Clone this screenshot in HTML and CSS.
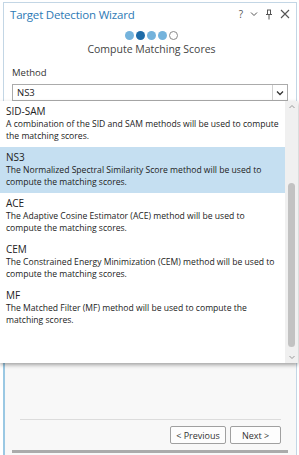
FILE: index.html
```html
<!DOCTYPE html>
<html lang="en">
<head>
  <meta charset="UTF-8">
  <title>Target Detection Wizard</title>
  <link rel="stylesheet" href="styles.css">
</head>
<body>

  <div class="wizard">
    <!-- title bar -->
    <div class="title-bar">
      <span class="title">Target Detection Wizard</span>
      <div class="win-icons">
        <span class="help">?</span>
        <svg width="8" height="6" viewBox="0 0 8 6"><path d="M1 1.5l3 3 3-3" fill="none" stroke="#555" stroke-width="1"/></svg>
        <svg width="8" height="11" viewBox="0 0 8 11"><path d="M2 1h4M2.5 1v4.5M5.5 1v4.5M1 5.5h6M4 5.5v5" fill="none" stroke="#555" stroke-width="1"/></svg>
        <svg width="10" height="10" viewBox="0 0 10 10"><path d="M1 1l8 8M9 1l-8 8" fill="none" stroke="#555" stroke-width="1.1"/></svg>
      </div>
    </div>

    <div class="steps">
      <span class="dot done"></span>
      <span class="dot current"></span>
      <span class="dot done"></span>
      <span class="dot done"></span>
      <span class="dot todo"></span>
    </div>
    <div class="step-name">Compute Matching Scores</div>

    <div class="field">
      <div class="field-label">Method</div>
      <div class="select">
        <span class="select-value">NS3</span>
        <span class="select-btn">
          <svg width="8" height="6" viewBox="0 0 8 6"><path d="M1 1.5l3 3 3-3" fill="none" stroke="#333" stroke-width="1.3"/></svg>
        </span>
      </div>
    </div>

    <div class="lower">
      <div class="footer">
        <div class="footer-line"></div>
        <div class="buttons">
          <button class="btn btn-prev">&lt; Previous</button>
          <button class="btn btn-next">Next &gt;</button>
        </div>
      </div>
      <div class="hscroll"></div>
    </div>
  </div>

  <!-- open dropdown list -->
  <div class="dropdown">
    <ul class="options">
      <li class="option">
        <div class="opt-name">SID-SAM</div>
        <div class="opt-desc">A combination of the SID and SAM methods will be used to compute the matching scores.</div>
      </li>
      <li class="option selected">
        <div class="opt-name">NS3</div>
        <div class="opt-desc">The Normalized Spectral Similarity Score method will be used to compute the matching scores.</div>
      </li>
      <li class="option">
        <div class="opt-name">ACE</div>
        <div class="opt-desc">The Adaptive Cosine Estimator (ACE) method will be used to compute the matching scores.</div>
      </li>
      <li class="option">
        <div class="opt-name">CEM</div>
        <div class="opt-desc">The Constrained Energy Minimization (CEM) method will be used to compute the matching scores.</div>
      </li>
      <li class="option">
        <div class="opt-name">MF</div>
        <div class="opt-desc">The Matched Filter (MF) method will be used to compute the matching scores.</div>
      </li>
    </ul>
    <div class="vscroll">
      <svg class="arrow" width="12" height="12" viewBox="0 0 12 12"><path d="M3.5 7l2.5-2.5 2.5 2.5" fill="none" stroke="#999" stroke-width="1"/></svg>
      <div class="track"><div class="thumb"></div></div>
      <svg class="arrow" width="12" height="12" viewBox="0 0 12 12"><path d="M3.5 5l2.5 2.5 2.5-2.5" fill="none" stroke="#999" stroke-width="1"/></svg>
    </div>
  </div>

</body>
</html>
```

FILE: styles.css
```css
body {
  margin: 0;
  font-family: 'Open Sans', 'Noto Sans', sans-serif;
  background: #fff;
  color: #222;
}

.wizard {
  margin: 2px 2px 0 3px;
  height: 453px;
  border: 1px solid #c3d6e5;
  border-bottom: none;
  background: #fff;
  display: flex;
  flex-direction: column;
  box-sizing: border-box;
}

.title-bar {
  height: 22px;
  padding: 0 6px;
  display: flex;
  justify-content: space-between;
  align-items: center;
}

.title {
  font-size: 11.5px;
  letter-spacing: -0.2px;
  color: #2d7ab5;
}

.win-icons {
  display: flex;
  align-items: center;
  gap: 7px;
  color: #555;
}

.help {
  font-size: 10px;
}

.steps {
  margin-top: 5px;
  height: 10px;
  display: flex;
  justify-content: center;
  align-items: center;
  gap: 2px;
  padding-left: 3px;
}

.dot {
  width: 9px;
  height: 9px;
  border-radius: 50%;
  box-sizing: border-box;
}

.dot.done {
  background: #74b3dc;
}

.dot.current {
  background: #1f6ca8;
}

.dot.todo {
  border: 1px solid #8a8a8a;
  background: #fff;
}

.step-name {
  margin-top: 1px;
  line-height: 16px;
  font-size: 10.5px;
  color: #444;
  text-align: center;
  padding-left: 3px;
}

.field {
  padding: 0 8px;
}

.field-label {
  margin-top: 9px;
  line-height: 14px;
  font-size: 9.5px;
  color: #333;
}

.select {
  margin-top: 4px;
  height: 17px;
  border: 1px solid #ababab;
  display: flex;
  align-items: center;
  justify-content: space-between;
  box-sizing: border-box;
}

.select-value {
  padding-left: 4px;
  font-size: 9.5px;
}

.select-btn {
  width: 14px;
  height: 15px;
  border-left: 1px solid #d0d0d0;
  display: flex;
  align-items: center;
  justify-content: center;
}

.lower {
  flex: 1;
  margin-top: 10px;
  margin-left: -1px;
  background: #f8f8f8;
  border-left: 2px solid #9ac8e3;
  display: flex;
  flex-direction: column;
  justify-content: flex-end;
}

.footer {
  padding: 0 15px 0 15px;
}

.footer-line {
  height: 1px;
  background: #dcdcdc;
}

.buttons {
  margin-top: 6px;
  display: flex;
  justify-content: flex-end;
  gap: 4px;
}

.btn {
  height: 18px;
  padding: 0;
  font-family: 'Open Sans', sans-serif;
  font-size: 9px;
  white-space: nowrap;
  color: #333;
  background: #fdfdfd;
  border: 1px solid #a0a0a0;
  border-radius: 2px;
}

.btn-prev {
  width: 56px;
}

.btn-next {
  width: 51px;
}

.hscroll {
  margin: 6px 8px 2px 7px;
  height: 3px;
  background: #ababab;
}

.dropdown {
  position: absolute;
  top: 101px;
  left: 0;
  width: 298px;
  height: 262px;
  background: #fff;
  display: flex;
  box-shadow: 0 2px 4px rgba(0, 0, 0, 0.35);
}

.options {
  flex: 1;
  list-style: none;
  margin: 0;
  padding: 0;
}

.option {
  height: 46px;
  padding: 3px 4px 0 6px;
  box-sizing: border-box;
}

.option.selected {
  background: #c5dff1;
}

.opt-name {
  line-height: 14px;
  font-size: 10px;
  color: #222;
}

.opt-desc {
  line-height: 12px;
  font-size: 8.6px;
  color: #222;
}

.vscroll {
  width: 13px;
  background: #f0f0f0;
  display: flex;
  flex-direction: column;
  align-items: center;
}

.arrow {
  flex: none;
}

.track {
  flex: 1;
  width: 100%;
  display: flex;
  justify-content: center;
  padding-top: 70px;
  padding-bottom: 4px;
  box-sizing: border-box;
}

.thumb {
  width: 7px;
  height: 100%;
  border-radius: 4px;
  background: #c2c2c2;
}
```
